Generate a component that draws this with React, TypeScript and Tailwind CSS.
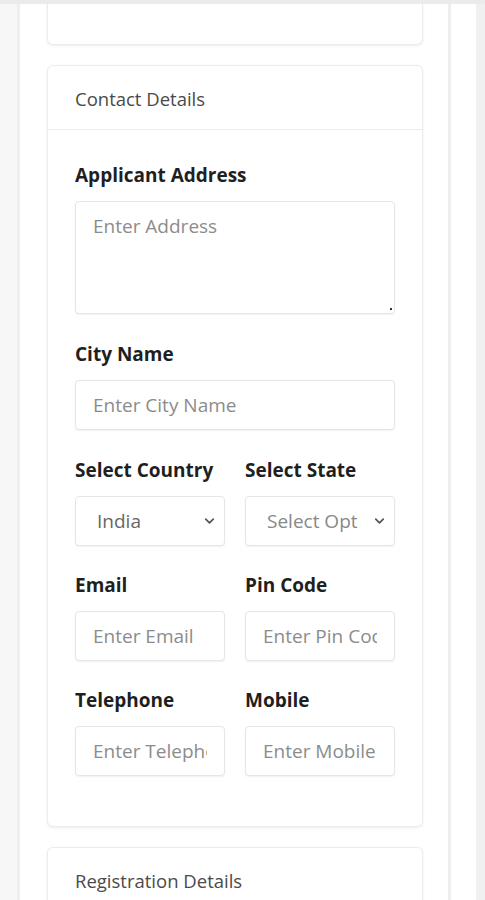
import { ChevronDown } from "lucide-react";

const inputCls =
  "w-full h-[50px] rounded-[4px] border border-[#e6e6e6] bg-white px-[17px] text-[19px] text-[#555] placeholder:text-[#8c8c8c] shadow-[0_1px_2px_rgba(0,0,0,0.06)] outline-none";

function Label({ children }: { children: React.ReactNode }) {
  return <div className="mb-[14px] text-[19px] leading-6 font-bold text-[#1f1f1f]">{children}</div>;
}

function Select({ value, placeholder }: { value?: string; placeholder?: string }) {
  return (
    <div className="relative">
      <select
        defaultValue=""
        className={
          "w-full h-[50px] appearance-none rounded-[4px] border border-[#e6e6e6] bg-white pl-[21px] pr-[36px] text-[19px] shadow-[0_1px_2px_rgba(0,0,0,0.06)] outline-none " +
          (value ? "text-[#666]" : "text-[#888]")
        }
      >
        <option value="">{value ?? placeholder}</option>
      </select>
      <ChevronDown
        className="pointer-events-none absolute right-[8px] top-1/2 -translate-y-1/2 text-[#555]"
        size={15}
        strokeWidth={2.75}
      />
    </div>
  );
}

function Card({ title, children, cut }: { title?: string; children?: React.ReactNode; cut?: boolean }) {
  return (
    <div
      className={
        "bg-white border border-[#ececec] shadow-[0_1px_3px_rgba(0,0,0,0.07)] " +
        (cut ? "rounded-b-[6px] border-t-0" : "rounded-[6px]")
      }
    >
      {title && (
        <div className="h-[64px] border-b border-[#ececec] px-[27px] pt-[21px] text-[18.5px] leading-6 text-[#4a4a4a]">
          {title}
        </div>
      )}
      {children}
    </div>
  );
}

export default function App() {
  return (
    <div
      className="h-[900px] w-[485px] overflow-hidden bg-[#f1f1f1] border-t-[4px] border-[#ebebeb] flex"
      style={{ fontFamily: "'Open Sans', 'Noto Sans', sans-serif" }}
    >
      <div className="w-[17px] bg-[#f7f7f7]" />
      <div className="w-[434px] shrink-0 bg-white border-x-[3px] border-[#eeeeee] pl-[27px] pr-[25px] flex flex-col gap-[20px]">
        <Card cut>
          <div className="h-[40px]" />
        </Card>

        <Card title="Contact Details">
          <div className="px-[27px] pt-[33px] pb-[23px]">
            <div className="mb-[28px]">
              <Label>Applicant Address</Label>
              <div className="relative">
                <textarea
                  placeholder="Enter Address"
                  className="block w-full h-[113px] resize-none rounded-[4px] border border-[#e6e6e6] bg-white px-[17px] py-[12px] text-[19px] leading-6 text-[#555] placeholder:text-[#8c8c8c] shadow-[0_1px_2px_rgba(0,0,0,0.06)] outline-none"
                />
                <span className="absolute right-[3px] bottom-[4px] h-[2px] w-[2px] bg-[#333]" />
              </div>
            </div>
            <div className="mb-[28px]">
              <Label>City Name</Label>
              <input className={inputCls} placeholder="Enter City Name" />
            </div>
            <div className="grid grid-cols-2 gap-x-[20px]">
              <div className="mb-[27px]">
                <Label>Select Country</Label>
                <Select value="India" />
              </div>
              <div className="mb-[27px]">
                <Label>Select State</Label>
                <Select placeholder="Select Option" />
              </div>
              <div className="mb-[27px]">
                <Label>Email</Label>
                <input className={inputCls} placeholder="Enter Email" />
              </div>
              <div className="mb-[27px]">
                <Label>Pin Code</Label>
                <input className={inputCls} placeholder="Enter Pin Code" />
              </div>
              <div className="mb-[27px]">
                <Label>Telephone</Label>
                <input className={inputCls} placeholder="Enter Telephone" />
              </div>
              <div className="mb-[27px]">
                <Label>Mobile</Label>
                <input className={inputCls} placeholder="Enter Mobile" />
              </div>
            </div>
          </div>
        </Card>

        <Card title="Registration Details" />
      </div>
      <div className="w-[25px] bg-white" />
      <div className="flex-1 bg-[#f0f0f0]" />
    </div>
  );
}
